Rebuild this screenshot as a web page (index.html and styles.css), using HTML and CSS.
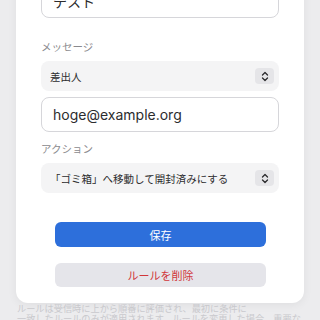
FILE: index.html
```html
<!DOCTYPE html>
<html lang="ja">
<head>
  <meta charset="UTF-8" />
  <title>ルールを編集</title>
  <link rel="stylesheet" href="styles.css">
</head>
<body>
  <div class="page">
    <div class="sheet">
      <div class="field">
        <div class="text-input">テスト</div>
      </div>

      <div class="field">
        <div class="label">メッセージ</div>
        <div class="select">
          <span>差出人</span>
          <span class="chevron">
            <svg width="8" height="11" viewBox="0 0 8 11"><path d="M1.5 4 L4 1.5 L6.5 4 M1.5 7 L4 9.5 L6.5 7" fill="none" stroke="#2c2c2e" stroke-width="1.3" stroke-linecap="round" stroke-linejoin="round"/></svg>
          </span>
        </div>
        <div class="text-input">hoge@example.org</div>
      </div>

      <div class="field">
        <div class="label">アクション</div>
        <div class="select">
          <span>「ゴミ箱」へ移動して開封済みにする</span>
          <span class="chevron">
            <svg width="8" height="11" viewBox="0 0 8 11"><path d="M1.5 4 L4 1.5 L6.5 4 M1.5 7 L4 9.5 L6.5 7" fill="none" stroke="#2c2c2e" stroke-width="1.3" stroke-linecap="round" stroke-linejoin="round"/></svg>
          </span>
        </div>
      </div>

      <div class="buttons">
        <button class="btn save">保存</button>
        <button class="btn delete">ルールを削除</button>
      </div>
    </div>

    <p class="note">ルールは受信時に上から順番に評価され、最初に条件に<br>一致したルールのみが適用されます。ルールを変更した場合、重要な</p>
  </div>
</body>
</html>
```

FILE: styles.css
```css
body {
  margin: 0;
  background: #ececee;
  font-family: Inter, "Noto Sans CJK JP", sans-serif;
  color: #1c1c1e;
  overflow: hidden;
}
.page {
  padding: 0 16px;
}
.sheet {
  margin-top: -17px;
  background: #fff;
  border-radius: 0 0 12px 12px;
  box-shadow: 0 2px 10px rgba(0, 0, 0, 0.06);
  padding: 0 25px 16px;
}
.field {
  display: flex;
  flex-direction: column;
  gap: 6px;
  margin-bottom: 11px;
}
.field:first-child {
  margin-bottom: 23px;
}
.label {
  font-size: 10.5px;
  line-height: 14px;
  color: #8a8a8e;
}
.text-input {
  height: 33px;
  border: 1px solid #d6d6da;
  border-radius: 8px;
  padding: 0 11px;
  display: flex;
  align-items: center;
  font-size: 14px;
  color: #2c2c2e;
}
.select {
  height: 30px;
  background: #f4f4f5;
  border-radius: 8px;
  padding: 0 5px 0 9px;
  display: flex;
  align-items: center;
  justify-content: space-between;
  font-size: 10.5px;
  color: #2c2c2e;
}
.chevron {
  width: 19px;
  height: 16px;
  background: #e5e5e8;
  border-radius: 4px;
  display: flex;
  align-items: center;
  justify-content: center;
}
.buttons {
  display: flex;
  flex-direction: column;
  gap: 16px;
  margin: 29px 13px 0 14px;
}
.btn {
  border: none;
  border-radius: 6px;
  font-family: inherit;
  font-size: 11px;
  height: 25px;
  padding: 0;
}
.save {
  background: #2d6fdb;
  color: #fff;
}
.delete {
  background: #e5e5ea;
  color: #d1373a;
  height: 24px;
}
.note {
  margin: 1px 0 0;
  padding: 0 1px;
  font-size: 9.2px;
  line-height: 10px;
  color: #c9c9cd;
  white-space: nowrap;
  overflow: hidden;
}
```
